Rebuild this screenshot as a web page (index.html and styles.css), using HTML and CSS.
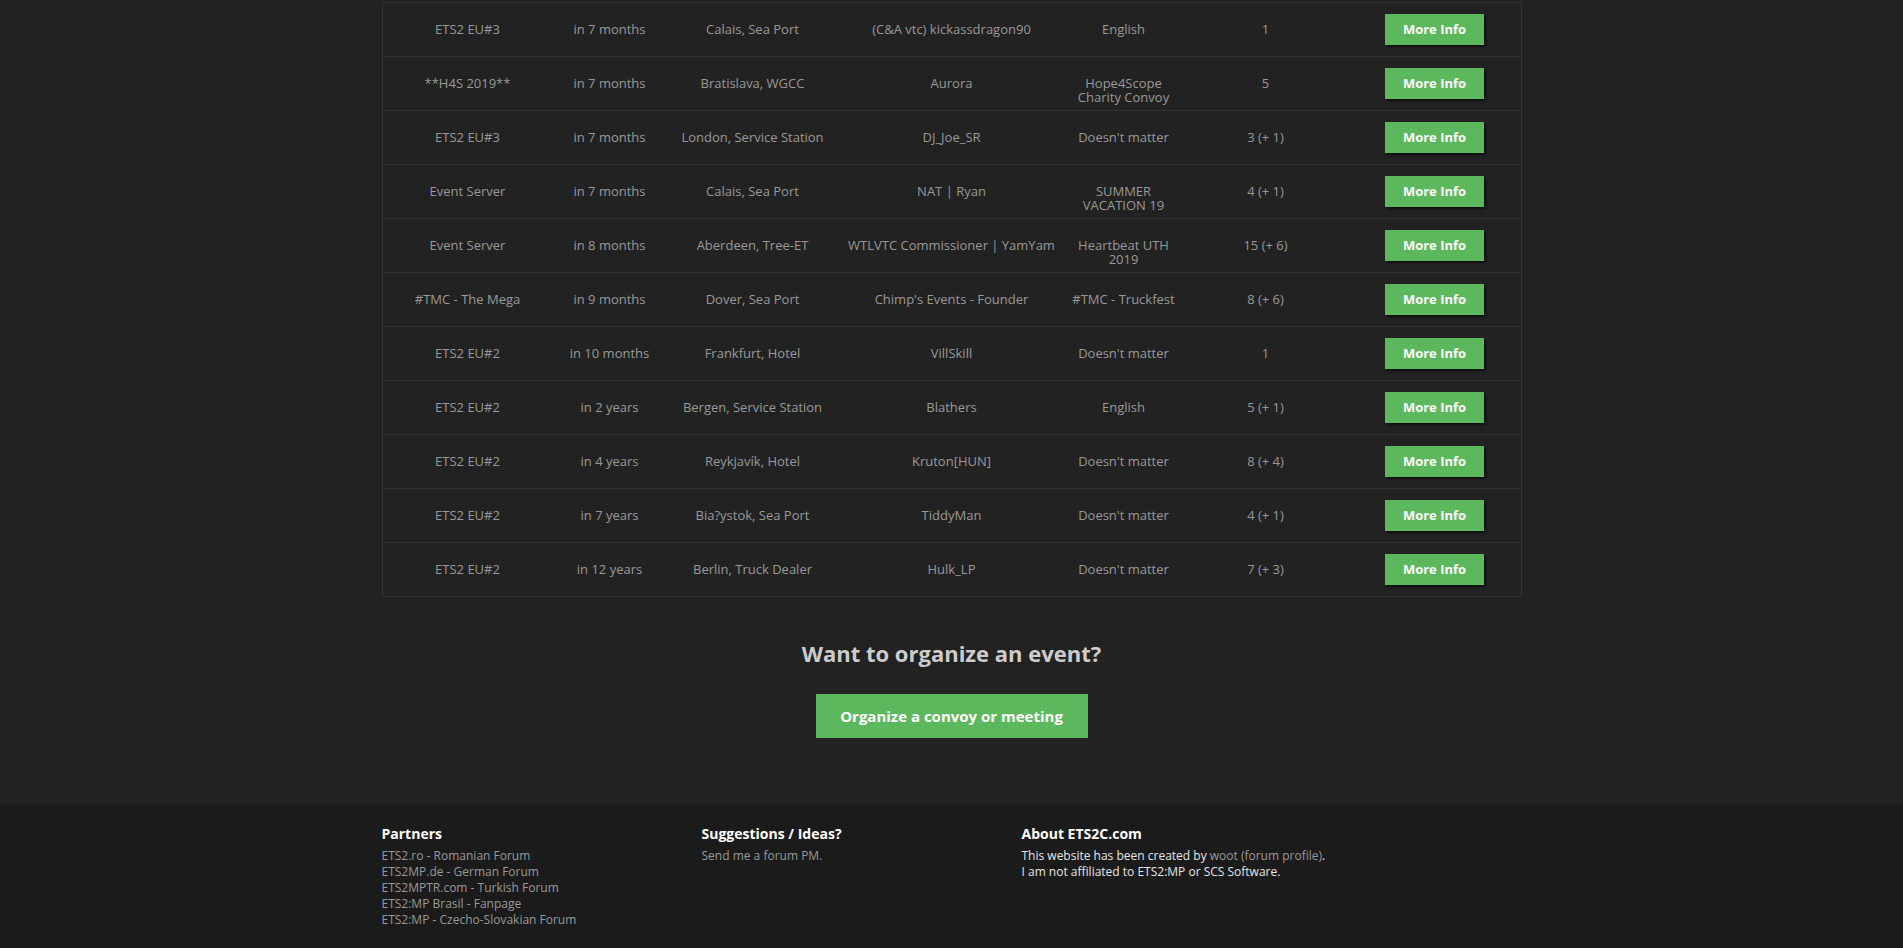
FILE: index.html
```html
<!DOCTYPE html>
<html lang="en">
<head>
<meta charset="utf-8">
<title>ETS2C - Events</title>
<link rel="stylesheet" href="styles.css">
</head>
<body>
<main class="page">
  <div class="container">
    <table class="events">
      <colgroup>
        <col class="c-server"><col class="c-when"><col class="c-place"><col class="c-org"><col class="c-lang"><col class="c-part"><col class="c-act">
      </colgroup>
      <tbody>
        <tr><td>ETS2 EU#3</td><td>in 7 months</td><td>Calais, Sea Port</td><td>(C&amp;A vtc) kickassdragon90</td><td>English</td><td>1</td><td class="act"><a class="btn-info" href="#">More Info</a></td></tr>
        <tr><td>**H4S 2019**</td><td>in 7 months</td><td>Bratislava, WGCC</td><td>Aurora</td><td>Hope4Scope Charity Convoy</td><td>5</td><td class="act"><a class="btn-info" href="#">More Info</a></td></tr>
        <tr><td>ETS2 EU#3</td><td>in 7 months</td><td>London, Service Station</td><td>DJ_Joe_SR</td><td>Doesn't matter</td><td>3 (+ 1)</td><td class="act"><a class="btn-info" href="#">More Info</a></td></tr>
        <tr><td>Event Server</td><td>in 7 months</td><td>Calais, Sea Port</td><td>NAT | Ryan</td><td>SUMMER VACATION 19</td><td>4 (+ 1)</td><td class="act"><a class="btn-info" href="#">More Info</a></td></tr>
        <tr><td>Event Server</td><td>in 8 months</td><td>Aberdeen, Tree-ET</td><td>WTLVTC Commissioner | YamYam</td><td>Heartbeat UTH 2019</td><td>15 (+ 6)</td><td class="act"><a class="btn-info" href="#">More Info</a></td></tr>
        <tr><td>#TMC - The Mega</td><td>in 9 months</td><td>Dover, Sea Port</td><td>Chimp's Events - Founder</td><td>#TMC - Truckfest</td><td>8 (+ 6)</td><td class="act"><a class="btn-info" href="#">More Info</a></td></tr>
        <tr><td>ETS2 EU#2</td><td>in 10 months</td><td>Frankfurt, Hotel</td><td>VillSkill</td><td>Doesn't matter</td><td>1</td><td class="act"><a class="btn-info" href="#">More Info</a></td></tr>
        <tr><td>ETS2 EU#2</td><td>in 2 years</td><td>Bergen, Service Station</td><td>Blathers</td><td>English</td><td>5 (+ 1)</td><td class="act"><a class="btn-info" href="#">More Info</a></td></tr>
        <tr><td>ETS2 EU#2</td><td>in 4 years</td><td>Reykjavík, Hotel</td><td>Kruton[HUN]</td><td>Doesn't matter</td><td>8 (+ 4)</td><td class="act"><a class="btn-info" href="#">More Info</a></td></tr>
        <tr><td>ETS2 EU#2</td><td>in 7 years</td><td>Bia?ystok, Sea Port</td><td>TiddyMan</td><td>Doesn't matter</td><td>4 (+ 1)</td><td class="act"><a class="btn-info" href="#">More Info</a></td></tr>
        <tr><td>ETS2 EU#2</td><td>in 12 years</td><td>Berlin, Truck Dealer</td><td>Hulk_LP</td><td>Doesn't matter</td><td>7 (+ 3)</td><td class="act"><a class="btn-info" href="#">More Info</a></td></tr>
      </tbody>
    </table>

    <section class="organize">
      <h2 class="organize-title">Want to organize an event?</h2>
      <a class="btn-organize" href="#">Organize a convoy or meeting</a>
    </section>
  </div>
</main>

<footer class="footer">
  <div class="container footer-grid">
    <div class="footer-col">
      <h4 class="footer-title">Partners</h4>
      <ul class="footer-links">
        <li><a href="#">ETS2.ro - Romanian Forum</a></li>
        <li><a href="#">ETS2MP.de - German Forum</a></li>
        <li><a href="#">ETS2MPTR.com - Turkish Forum</a></li>
        <li><a href="#">ETS2:MP Brasil - Fanpage</a></li>
        <li><a href="#">ETS2:MP - Czecho-Slovakian Forum</a></li>
      </ul>
    </div>
    <div class="footer-col">
      <h4 class="footer-title">Suggestions / Ideas?</h4>
      <ul class="footer-links">
        <li><a href="#">Send me a forum PM.</a></li>
      </ul>
    </div>
    <div class="footer-col">
      <h4 class="footer-title">About ETS2C.com</h4>
      <p class="footer-text">This website has been created by <a href="#">woot (forum profile)</a>.<br>I am not affiliated to ETS2:MP or SCS Software.</p>
    </div>
  </div>
</footer>
</body>
</html>
```

FILE: styles.css
```css
* { box-sizing: border-box; }

html, body {
  margin: 0;
  padding: 0;
  background: #222222;
  font-family: "Open Sans", "Liberation Sans", Arial, sans-serif;
  font-size: 13px;
  color: #999999;
}

a { text-decoration: none; }

.page {
  padding-top: 2px;
}

.container {
  width: 1140px;
  margin: 0 auto;
}

.events {
  width: 1140px;
  table-layout: fixed;
  border-collapse: separate;
  border-spacing: 0;
  border: 1px solid #333333;
}

.c-server { width: 170px; }
.c-when { width: 114px; }
.c-place { width: 172px; }
.c-org { width: 226px; }
.c-lang { width: 118px; }
.c-part { width: 166px; }
.c-act { width: 172px; }

.events td {
  height: 54px;
  padding: 20px 4px 0;
  border-bottom: 1px solid #333333;
  vertical-align: top;
  text-align: center;
  line-height: 13.5px;
  color: #999999;
}

.events tr:last-child td {
  height: 53px;
  border-bottom: none;
}

.events td.act {
  padding-top: 11px;
}

.btn-info {
  display: inline-block;
  width: 99px;
  height: 31px;
  line-height: 31px;
  background: #5cb85c;
  color: #ffffff;
  font-weight: 700;
  font-size: 13px;
  text-align: center;
  box-shadow: 2px 2px 2px rgba(0, 0, 0, 0.55);
}

.organize {
  display: flex;
  flex-direction: column;
  align-items: center;
  padding-top: 41px;
  padding-bottom: 67px;
}

.organize-title {
  margin: 0;
  font-size: 22px;
  line-height: 30px;
  font-weight: 700;
  color: #cccccc;
}

.btn-organize {
  margin-top: 26px;
  display: inline-block;
  width: 272px;
  height: 44px;
  line-height: 44px;
  text-align: center;
  background: #5cb85c;
  color: #ffffff;
  font-weight: 700;
  font-size: 15px;
}

.footer {
  background: #1b1b1b;
  padding: 19px 0 24px;
  min-height: 143px;
}

.footer-grid {
  display: grid;
  grid-template-columns: 320px 320px 320px;
}

.footer-title {
  margin: 0 0 4px;
  font-size: 14px;
  line-height: 20px;
  font-weight: 700;
  color: #ffffff;
}

.footer-links {
  list-style: none;
  margin: 0;
  padding: 0;
  font-size: 12px;
  line-height: 16px;
}

.footer-links a {
  color: #999999;
}

.footer-text {
  margin: 0;
  font-size: 12px;
  line-height: 16px;
  color: #e6e6e6;
}

.footer-text a {
  color: #999999;
}
```
